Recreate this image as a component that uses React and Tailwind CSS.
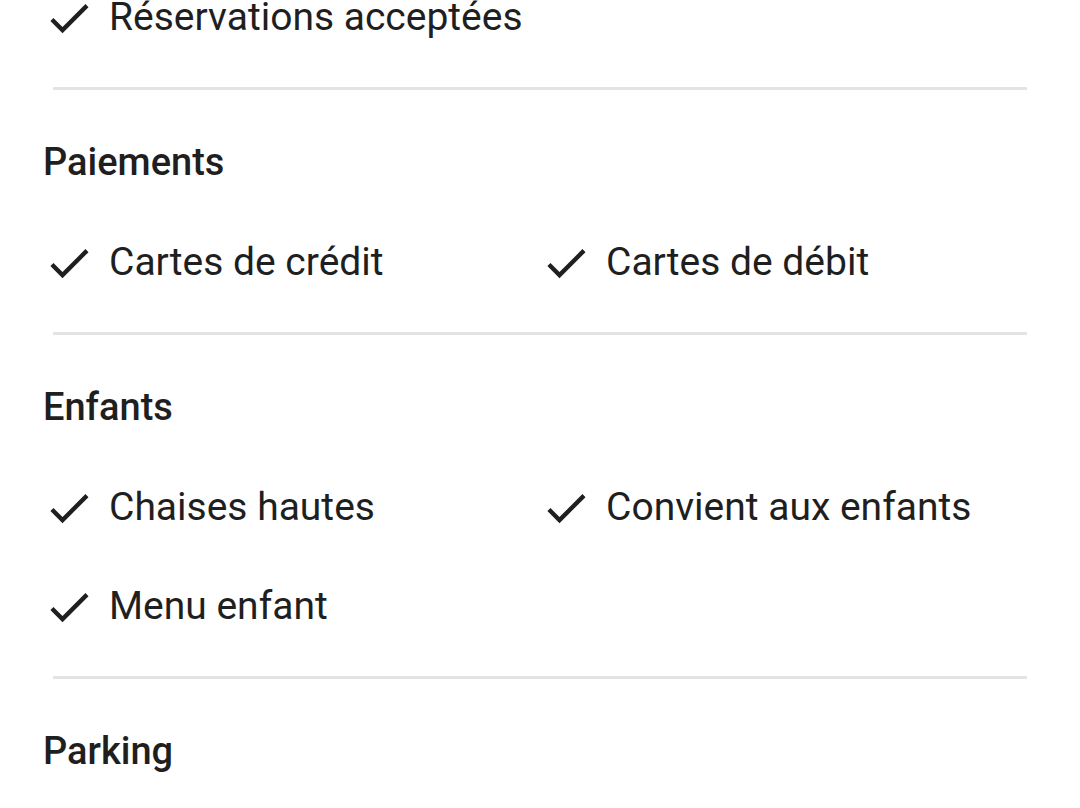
import React from "react";

const sections = [
  { title: null, items: ["Réservations acceptées"] },
  { title: "Paiements", items: ["Cartes de crédit", "Cartes de débit"] },
  {
    title: "Enfants",
    items: ["Chaises hautes", "Convient aux enfants", "Menu enfant"],
  },
  { title: "Parking", items: [] },
];

function Check() {
  return (
    <svg viewBox="0 0 24 24" className="w-[52px] h-[52px] shrink-0" fill="#1f1f1f">
      <path d="M9 16.17L4.83 12l-1.42 1.41L9 19 21 7l-1.41-1.41z" />
    </svg>
  );
}

function Item({ label }) {
  return (
    <div className="flex items-center h-[99px] gap-[14px]">
      <Check />
      <span className="text-[39px] text-[#1f1f1f] whitespace-nowrap">{label}</span>
    </div>
  );
}

export default function App() {
  return (
    <div
      className="w-[1080px] h-[808px] overflow-hidden bg-white"
      style={{ fontFamily: "Roboto, 'Noto Sans', sans-serif" }}
    >
      <div className="-mt-[32px]">
        {sections.map((s, i) => (
          <div key={i}>
            {s.title && (
              <div className="pt-[48px] pl-[43px] mb-[27px] h-[48px] leading-[48px] text-[38px] font-medium text-[#1f1f1f] box-content">
                {s.title}
              </div>
            )}
            {s.items.length > 0 && (
              <div className="grid grid-cols-[497px_1fr] pl-[43px]">
                {s.items.map((it) => (
                  <Item key={it} label={it} />
                ))}
              </div>
            )}
            {s.items.length > 0 && (
              <div className="mt-[20px] ml-[53px] mr-[53px] h-[3px] bg-[#e3e3e3]" />
            )}
          </div>
        ))}
      </div>
    </div>
  );
}
